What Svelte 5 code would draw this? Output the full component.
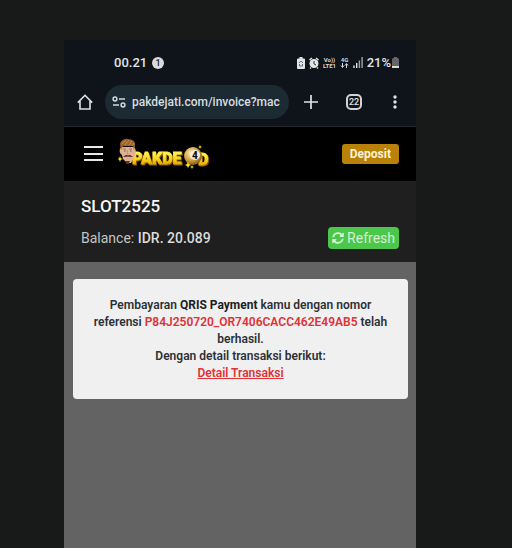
<script lang="ts">
  let url = $state('pakdejati.com/invoice?mac');

  const account = { name: 'SLOT2525', balance: 'IDR. 20.089' };
  const payment = { method: 'QRIS Payment', reference: 'P84J250720_OR7406CACC462E49AB5' };
</script>

<div class="page">
  <div class="phone">
    <div class="status-bar">
      <div class="clock">
        <span>00.21</span>
        <span class="count">1</span>
      </div>
      <div class="indicators">
        <svg width="8" height="12" viewBox="0 0 8 12">
          <path d="M2.5 0h3v1.5H7a1 1 0 0 1 1 1V11a1 1 0 0 1-1 1H1a1 1 0 0 1-1-1V2.500a1 1 0 0 1 1-1h1.500z" fill="#e2e4e6" />
          <path d="M2 6 4 4l2 2M2.500 7v2h3V7" fill="none" stroke="#4a4f55" stroke-width=".8" />
        </svg>
        <svg width="10" height="12" viewBox="0 0 10 12">
          <path d="M.5 3 3 1M9.500 3 7 1M2 10.500 1 11.500M8 10.500l1 1" stroke="#e2e4e6" stroke-width="1.500" />
          <circle cx="5" cy="6.500" r="4.500" fill="#e2e4e6" />
          <path d="M5 4v3l2 1" fill="none" stroke="#20252b" stroke-width=".9" />
        </svg>
        <svg width="13" height="14" viewBox="0 0 13 14" class="tiny">
          <text x="6.500" y="6" text-anchor="middle">Vo))</text>
          <text x="6.500" y="12" text-anchor="middle">LTE1</text>
        </svg>
        <svg width="9" height="14" viewBox="0 0 9 14" class="tiny">
          <text x="4.500" y="6" text-anchor="middle">4G</text>
          <path d="M2.500 7v4M1 9.500l1.500 2L4 9.500M6.500 12V8M5 9.500l1.500-2L8 9.500" fill="none" stroke="#d4d6d8" />
        </svg>
        <svg width="10" height="11" viewBox="0 0 10 11">
          <path d="M1 11V8.500M3.700 11V6" stroke="#e2e4e6" stroke-width="1.400" />
          <path d="M6.400 11V3.500M9.100 11V0" stroke="#a0a3a7" stroke-width="1.400" />
        </svg>
        <div class="battery">
          <span>21%</span>
          <svg width="7" height="11" viewBox="0 0 7 11">
            <path d="M2 0h3v1h1l1 1v7H0V2l1-1h1z" fill="#62656a" />
            <path d="M0 9h7v2H0z" fill="#d8dadc" />
          </svg>
        </div>
      </div>
    </div>

    <div class="browser-bar">
      <button class="icon" aria-label="Home">
        <svg width="16" height="16" viewBox="0 0 16 16" fill="none" stroke="#e0e2e4" stroke-width="1.600">
          <path d="M.8 8.600 8 1.300l7.200 7.300M3 7v8h10V7" />
        </svg>
      </button>
      <div class="address">
        <svg width="14" height="12" viewBox="0 0 14 12" fill="none" stroke="#d4d9dc" stroke-width="1.500">
          <circle cx="3" cy="3" r="1.900" />
          <path d="M7 3h6M1 9h6" />
          <circle cx="11" cy="9" r="1.900" />
        </svg>
        <input type="text" aria-label="Address" bind:value={url} />
      </div>
      <button class="icon" aria-label="New tab">
        <svg width="14" height="14" viewBox="0 0 14 14" stroke="#e0e2e4" stroke-width="1.700">
          <path d="M7 0v14M0 7h14" />
        </svg>
      </button>
      <button class="icon tabs" aria-label="22 open tabs">22</button>
      <button class="icon menu" aria-label="More">
        <svg width="4" height="14" viewBox="0 0 4 14" fill="#e0e2e4">
          <circle cx="2" cy="2" r="1.700" />
          <circle cx="2" cy="7" r="1.700" />
          <circle cx="2" cy="12" r="1.700" />
        </svg>
      </button>
    </div>

    <header class="site-header">
      <button class="icon" aria-label="Open menu">
        <svg width="20" height="16" viewBox="0 0 20 16" stroke="#e8e8e8" stroke-width="2">
          <path d="M0 1h19M0 8h19M0 14h19" />
        </svg>
      </button>
      <a class="logo" href="/" aria-label="PAKDE4D">
        <svg width="94" height="32" viewBox="0 0 94 32">
          <defs>
            <linearGradient id="gold" x1="0" y1="0" x2="0" y2="1">
              <stop offset=".25" stop-color="#fff04a" />
              <stop offset=".6" stop-color="#f4cc10" />
              <stop offset="1" stop-color="#c98202" />
            </linearGradient>
            <radialGradient id="ball" cx=".4" cy=".35" r=".7">
              <stop offset="0" stop-color="#fff2c0" />
              <stop offset=".55" stop-color="#d2a445" />
              <stop offset="1" stop-color="#79500e" />
            </radialGradient>
          </defs>
          <g class="wordmark" fill="url(#gold)" stroke="url(#gold)" stroke-width=".8">
            <text x="14" y="26">PAKDE</text>
            <text x="80" y="27">D</text>
          </g>
          <!-- mascot head -->
          <path d="M3 9Q1 11 2 15l2 2 1 4 4 4h4l3-5 1-3q2-5-1-8z" fill="#e3b090" />
          <path d="M3 12 2 6q1-5 7-5 9 0 8 7l-1 4-1-4H5z" fill="#9d632a" />
          <path d="m4 6 4-4M7 7l4-5M11 7l3-4M14 8l2-3" stroke="#cd9250" stroke-width=".9" />
          <path d="M5 11h3M11 11h3" stroke="#8b5e42" stroke-width=".8" />
          <path d="M6 13h1.500M12 13h1.500" stroke="#4d6470" />
          <path d="M9.500 12v4h1" fill="none" stroke="#c58c6d" stroke-width=".8" />
          <path d="m5 19 3-2 2 .5 2-.5 3 2-5-.5z" fill="#352018" />
          <path d="M7 23h5l-1.500 3h-2z" fill="#5b3827" />
          <!-- billiard ball -->
          <circle cx="75" cy="18" r="9" fill="url(#ball)" />
          <circle cx="77" cy="17" r="5" fill="#f6efe0" />
          <text x="77" y="21" text-anchor="middle" class="ball-number">4</text>
          <path
            d="m2 18 .8 2.200L5 21l-2.200.8L2 24l-.8-2.200L-1 21l2.200-.8zM70 24l1 2 2 1-2 1-1 2-1-2-2-1 2-1zM82 7l.6 1.400L84 9l-1.400.6L82 11l-.6-1.400L80 9l1.400-.6zM74 27l.6 1.400L76 29l-1.400.6L74 31l-.6-1.400L72 29l1.400-.6z"
            fill="#ffe51a"
          />
        </svg>
      </a>
      <button class="deposit">Deposit</button>
    </header>

    <section class="account">
      <h1>{account.name}</h1>
      <div class="balance-row">
        <div class="balance">Balance: <b>{account.balance}</b></div>
        <button class="refresh">
          <svg width="12" height="12" viewBox="0 0 512 512" fill="currentColor">
            <path
              d="M370.700 133.300C339.500 104 298.900 88 255.800 88c-77.500.1-144.300 53.200-162.800 126.900-1.300 5.400-6.100 9.100-11.700 9.100H24.100c-7.500 0-13.200-6.800-11.800-14.200C33.900 94.900 134.800 8 256 8c66.400 0 126.800 26.100 171.300 68.700L463 41c15.100-15.100 41-4.400 41 17v134c0 13.300-10.700 24-24 24H346c-21.400 0-32.100-25.900-17-41zM32 296h134c21.400 0 32.100 25.900 17 41l-41.800 41.800c31.300 29.300 71.800 45.300 114.900 45.300 77.400-.1 144.300-53.100 162.800-126.800 1.300-5.400 6.100-9.100 11.700-9.100h57.300c7.500 0 13.200 6.800 11.800 14.200C478.100 417.100 377.200 504 256 504c-66.400 0-126.800-26.100-171.300-68.700L49 471c-15.100 15.100-41 4.400-41-17V320c0-13.300 10.700-24 24-24z"
            />
          </svg>
          Refresh
        </button>
      </div>
    </section>

    <main>
      <div class="notice">
        Pembayaran <b>{payment.method}</b> kamu dengan nomor referensi
        <span class="reference">{payment.reference}</span> telah berhasil.<br />
        Dengan detail transaksi berikut:<br />
        <a href="#detail">Detail Transaksi</a>
      </div>
    </main>
  </div>
</div>

<style>
  :global(body) {
    margin: 0;
    background: #171a19;
  }

  .page {
    box-sizing: border-box;
    min-height: 100vh;
    padding: 40px 96px 0 64px;
    display: flex;
    font-family: Roboto, sans-serif;
    font-size: 12px;
    color: #e2e4e6;
  }

  .phone {
    flex: 1;
    min-width: 0;
    display: flex;
    flex-direction: column;
    background: #0f141b;
  }

  button {
    font-family: inherit;
    border: 0;
    cursor: pointer;
  }

  svg {
    display: block;
    flex: none;
  }

  .icon {
    display: flex;
    align-items: center;
    justify-content: center;
    padding: 0;
    background: none;
  }

  .status-bar {
    display: flex;
    align-items: center;
    justify-content: space-between;
    height: 45px;
    padding: 0 17px 0 50px;
  }

  .clock,
  .indicators,
  .battery {
    display: flex;
    align-items: center;
  }

  .clock {
    gap: 5px;
    font-size: 13px;
    font-weight: 500;
  }

  .count {
    width: 12px;
    border-radius: 50%;
    background: #d8dadc;
    color: #20252b;
    font-size: 9px;
    line-height: 12px;
    text-align: center;
  }

  .indicators {
    gap: 4px;
    font-size: 13px;
    font-weight: 500;
  }

  .battery {
    gap: 1px;
  }

  .tiny {
    font-size: 6px;
    font-weight: 700;
    fill: #d4d6d8;
  }

  .browser-bar {
    display: flex;
    align-items: center;
    height: 34px;
    padding: 0 19px 7px 13px;
    border-bottom: 1px solid #22262e;
  }

  .address {
    flex: 1;
    min-width: 0;
    display: flex;
    align-items: center;
    gap: 6px;
    height: 34px;
    margin: 0 15px 0 12px;
    padding: 0 4px 0 7px;
    border-radius: 17px;
    background: #1b2a33;
  }

  .address input {
    flex: 1;
    min-width: 0;
    padding: 0;
    border: 0;
    outline: none;
    background: none;
    color: #d8dde0;
    font-family: inherit;
    font-size: 12px;
    font-weight: 500;
  }

  .tabs {
    box-sizing: border-box;
    width: 16px;
    height: 16px;
    margin: 0 31px 0 28px;
    border: 2px solid #d0d2d4;
    border-radius: 5px;
    color: #e0e2e4;
    font-size: 9px;
    font-weight: 500;
  }

  .site-header {
    display: flex;
    align-items: center;
    height: 54px;
    padding: 0 17px 0 20px;
    background: #000;
  }

  .logo {
    margin-left: 14px;
  }

  .wordmark {
    font-size: 16px;
    font-weight: 900;
    filter: drop-shadow(1px 1px 0 #8c5200);
  }

  .ball-number {
    font-size: 10px;
    font-weight: 900;
    fill: #111;
  }

  .deposit {
    height: 20px;
    margin-left: auto;
    padding: 0 8px;
    border-radius: 3px;
    background: #b98108;
    color: #fff3cf;
    font-size: 12px;
    font-weight: 700;
  }

  .account {
    padding: 15px 17px 13px;
    background: #1f1f1f;
  }

  h1 {
    margin: 0 0 11px;
    color: #f6f6f6;
    font-size: 17px;
    font-weight: 500;
    line-height: 20px;
  }

  .balance-row {
    display: flex;
    align-items: center;
    justify-content: space-between;
  }

  .balance {
    color: #c4c4c4;
    font-size: 14px;
    line-height: 20px;
  }

  .balance b {
    color: #dcdcdc;
    font-weight: 500;
  }

  .refresh {
    display: flex;
    align-items: center;
    gap: 3px;
    height: 22px;
    padding: 0 4px;
    border-radius: 4px;
    background: #4bc74c;
    color: #d5f0d3;
    font-size: 14px;
  }

  main {
    flex: 1;
    padding: 17px 8px 17px 9px;
    background: #636363;
  }

  .notice {
    padding: 18px 16px 17px;
    border-radius: 4px;
    background: #f0f0f0;
    color: #2c3036;
    font-weight: 600;
    line-height: 17px;
    text-align: center;
  }

  .notice b {
    color: #1b1e22;
    font-weight: 700;
  }

  .reference,
  .notice a {
    color: #df3235;
  }
</style>
